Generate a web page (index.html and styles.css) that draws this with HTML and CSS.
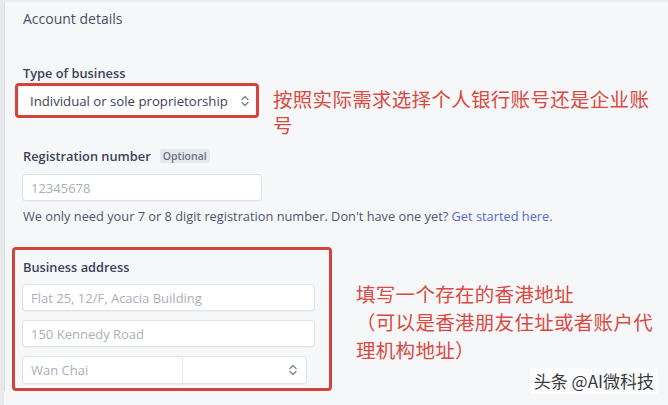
FILE: index.html
```html
<!DOCTYPE html>
<html lang="zh">
<head>
<meta charset="utf-8">
<title>Account details</title>
<link rel="stylesheet" href="styles.css">
</head>
<body>
<div class="page">
  <h2 class="title">Account details</h2>

  <div class="label first-label">Type of business</div>
  <div class="row row-type">
    <div class="mark mark-type">
      <div class="select select-type">
        <span class="select-text">Individual or sole proprietorship</span>
        <svg class="chev" viewBox="0 0 8 12" width="8" height="12"><path d="M1 4.5 L4 1.5 L7 4.5 M1 7.5 L4 10.5 L7 7.5" fill="none" stroke="#7d8594" stroke-width="1.4" stroke-linecap="round" stroke-linejoin="round"/></svg>
      </div>
    </div>
    <p class="note note-type">按照实际需求选择个人银行账号还是企业账号</p>
  </div>

  <div class="label reg-label">Registration number <span class="badge">Optional</span></div>
  <div class="input input-reg"><span class="ph">12345678</span></div>
  <p class="help">We only need your 7 or 8 digit registration number. Don't have one yet? <a class="link" href="#">Get started here.</a></p>

  <div class="row row-addr">
    <div class="mark mark-addr">
      <div class="label addr-label">Business address</div>
      <div class="input input-addr"><span class="ph">Flat 25, 12/F, Acacia Building</span></div>
      <div class="input input-addr"><span class="ph">150 Kennedy Road</span></div>
      <div class="split">
        <div class="input input-city"><span class="ph">Wan Chai</span></div>
        <div class="select select-region">
          <svg class="chev" viewBox="0 0 8 12" width="8" height="12"><path d="M1 4.5 L4 1.5 L7 4.5 M1 7.5 L4 10.5 L7 7.5" fill="none" stroke="#7d8594" stroke-width="1.4" stroke-linecap="round" stroke-linejoin="round"/></svg>
        </div>
      </div>
    </div>
    <p class="note note-addr">填写一个存在的香港地址<br>（可以是香港朋友住址或者账户代理机构地址）</p>
  </div>
</div>
<div class="watermark">头条 @AI微科技</div>
</body>
</html>
```

FILE: styles.css
```css
html, body {
  margin: 0;
  padding: 0;
}
body {
  width: 668px;
  height: 405px;
  overflow: hidden;
  background: #f6f7f9;
  border-left: 4px solid #e7e9ec;
  box-sizing: border-box;
  position: relative;
  font-family: "Open Sans", "Noto Sans", "Noto Sans CJK SC", sans-serif;
  color: #3c4257;
}
.page {
  padding: 8px 0 0 19px;
  border-top: 2px solid #eceef1;
  box-shadow: inset 1px 0 0 #dde0e4;
}
.title {
  margin: 0;
  font-size: 14px;
  line-height: 18px;
  font-weight: 400;
  color: #4a5060;
}
.label {
  font-size: 12.8px;
  line-height: 18px;
  font-weight: 600;
  color: #3c4257;
}
.first-label {
  margin-top: 36px;
}
.row {
  display: flex;
  align-items: flex-start;
}
.mark {
  border: 3px solid #d2443c;
  border-radius: 4px;
  box-sizing: border-box;
}
.mark-type {
  margin-left: -8px;
  width: 244px;
  height: 35px;
  padding: 1px;
  margin-top: 1px;
}
.select {
  display: flex;
  align-items: center;
  justify-content: space-between;
  background: #fff;
  box-sizing: border-box;
}
.select-type {
  height: 27px;
  padding: 0 6px 0 11px;
  border-radius: 2px;
}
.select-text {
  font-size: 13.2px;
  color: #3c4257;
  white-space: nowrap;
}
.chev {
  display: block;
  flex: none;
}
.note {
  margin: 0;
  font-family: "Noto Sans CJK SC", sans-serif;
  font-size: 19.5px;
  color: #d84a42;
  letter-spacing: 0.3px;
}
.note-type {
  margin-left: 14px;
  margin-top: 4px;
  width: 384px;
  line-height: 26px;
}
.reg-label {
  margin-top: 9px;
  display: flex;
  align-items: center;
}
.badge {
  margin-left: 9px;
  background: #e5e8ec;
  color: #6b7383;
  font-size: 10.5px;
  font-weight: 600;
  line-height: 14px;
  padding: 0 3px;
  border-radius: 2px;
}
.input {
  background: #fff;
  border: 1px solid #e0e3e8;
  border-radius: 4px;
  box-sizing: border-box;
  height: 27px;
  display: flex;
  align-items: center;
  padding-left: 8px;
  box-shadow: 0 1px 1px rgba(50, 50, 93, 0.05);
}
.ph {
  font-size: 13px;
  color: #a9b0ba;
  white-space: nowrap;
}
.input-reg {
  margin-top: 9px;
  width: 240px;
  margin-left: -1px;
}
.help {
  margin: 6px 0 0;
  font-size: 12.8px;
  line-height: 18px;
  color: #4f566b;
  white-space: nowrap;
}
.link {
  color: #5469d4;
  text-decoration: none;
}
.row-addr {
  margin-top: 22px;
}
.mark-addr {
  margin-left: -11px;
  width: 320px;
  height: 144px;
  padding: 8px 0 0 7px;
}
.addr-label {
  margin-left: 1px;
}
.input-addr {
  width: 293px;
  margin-top: 8px;
}
.input-addr + .input-addr {
  margin-top: 9px;
}
.split {
  display: flex;
  margin-top: 9px;
  width: 286px;
  height: 28px;
}
.input-city {
  width: 161px;
  height: 28px;
  border-radius: 4px 0 0 4px;
}
.select-region {
  width: 125px;
  height: 28px;
  border: 1px solid #e0e3e8;
  border-left: 1px solid #e6e8ec;
  border-radius: 0 4px 4px 0;
  justify-content: flex-end;
  padding-right: 9px;
  box-shadow: 0 1px 1px rgba(50, 50, 93, 0.05);
}
.input-city + .select-region {
  margin-left: -1px;
}
.note-addr {
  margin-left: 24px;
  margin-top: 33px;
  width: 304px;
  line-height: 28px;
}
.watermark {
  position: absolute;
  right: 10px;
  bottom: 11px;
  padding: 2px 4px;
  background: rgba(255, 255, 255, 0.6);
  font-family: "Noto Sans CJK SC", sans-serif;
  font-size: 17px;
  line-height: 22px;
  color: #3a3a3a;
}
```
